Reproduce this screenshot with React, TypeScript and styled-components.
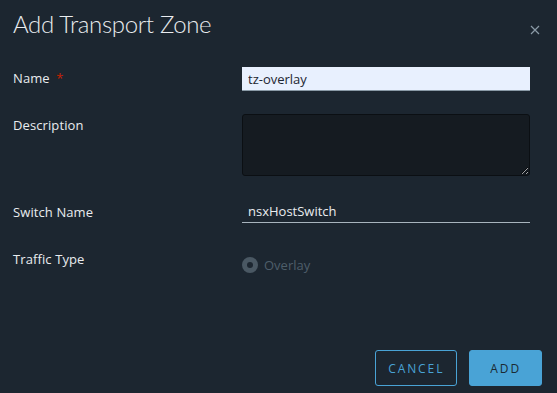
import styled, { createGlobalStyle } from "styled-components";

const GlobalStyle = createGlobalStyle`
  html, body {
    margin: 0;
    padding: 0;
    background: #1c2630;
  }
  body {
    font-family: "Open Sans", "Liberation Sans", sans-serif;
  }
`;

const App = () => {
  return (
    <>
      <GlobalStyle />
      <Modal>
        <Header>
          <Title>Add Transport Zone</Title>
          <CloseButton aria-label="Close">
            <svg width="10" height="10" viewBox="0 0 10 10">
              <path d="M1 1 L9 9 M9 1 L1 9" stroke="#8a9aa6" strokeWidth="1.2" />
            </svg>
          </CloseButton>
        </Header>
        <Form>
          <Row>
            <Label>
              Name <Required>*</Required>
            </Label>
            <TextInput $filled defaultValue="tz-overlay" />
          </Row>
          <Row>
            <Label $pad={2}>Description</Label>
            <TextArea />
          </Row>
          <Row>
            <Label $pad={4}>Switch Name</Label>
            <TextInput defaultValue="nsxHostSwitch" />
          </Row>
          <Row>
            <Label $pad={4}>Traffic Type</Label>
            <RadioWrap>
              <RadioDot />
              <RadioText>Overlay</RadioText>
            </RadioWrap>
          </Row>
        </Form>
        <Footer>
          <Button>CANCEL</Button>
          <Button $primary>ADD</Button>
        </Footer>
      </Modal>
    </>
  );
};

export default App;

const Modal = styled.div`
  width: 557px;
  height: 393px;
  box-sizing: border-box;
  background: #1c2630;
  display: flex;
  flex-direction: column;
`;

const Header = styled.div`
  display: flex;
  justify-content: space-between;
  align-items: flex-start;
  padding: 9px 17px 0 13px;
  height: 58px;
  box-sizing: border-box;
`;

const Title = styled.h1`
  margin: 0;
  font-family: Lato, "Open Sans", sans-serif;
  font-size: 24px;
  font-weight: 300;
  color: #e9ecef;
  letter-spacing: -0.35px;
`;

const CloseButton = styled.button`
  background: none;
  border: none;
  padding: 0;
  margin-top: 16px;
  cursor: pointer;
  display: flex;
`;

const Form = styled.div`
  display: flex;
  flex-direction: column;
  padding: 9px 27px 0 13px;
`;

const Row = styled.div`
  display: grid;
  grid-template-columns: 229px 1fr;
  align-items: start;
  margin-bottom: 23px;
`;

const Label = styled.div<{ $pad?: number }>`
  font-size: 13px;
  color: #e9ecef;
  padding-top: ${(p) => p.$pad ?? 2}px;
  line-height: 18px;
  letter-spacing: 0.1px;
`;

const Required = styled.span`
  color: #c92100;
  margin-left: 3px;
`;

const TextInput = styled.input<{ $filled?: boolean }>`
  height: 24px;
  box-sizing: border-box;
  width: 288px;
  border: none;
  border-bottom: 1px solid ${(p) => (p.$filled ? "#8a9aa6" : "#a8b4bd")};
  background: ${(p) => (p.$filled ? "#e8f0fe" : "transparent")};
  color: ${(p) => (p.$filled ? "#1c2630" : "#e9ecef")};
  padding: 0 6px;
  font-family: "Open Sans", "Liberation Sans", sans-serif;
  font-size: 13px;
  outline: none;
`;

const TextArea = styled.textarea`
  width: 288px;
  height: 62px;
  box-sizing: border-box;
  background: #151b21;
  border: 1px solid #0b0f13;
  border-radius: 3px;
  color: #e9ecef;
  resize: vertical;
  outline: none;
  margin: 0;
  display: block;
`;

const RadioWrap = styled.div`
  display: flex;
  align-items: center;
  gap: 6px;
  padding-top: 10px;
`;

const RadioDot = styled.span`
  width: 16px;
  height: 16px;
  border-radius: 50%;
  background: #4a5863;
  position: relative;
  &::after {
    content: "";
    position: absolute;
    left: 5px;
    top: 5px;
    width: 6px;
    height: 6px;
    border-radius: 50%;
    background: #1c2630;
  }
`;

const RadioText = styled.span`
  font-size: 13px;
  color: #4e5e6a;
`;

const Footer = styled.div`
  margin-top: auto;
  display: flex;
  justify-content: flex-end;
  gap: 12px;
  padding: 0 15px 7px 0;
`;

const Button = styled.button<{ $primary?: boolean }>`
  height: 36px;
  box-sizing: border-box;
  padding: 0 ${(p) => (p.$primary ? 20 : 12)}px;
  border-radius: 3px;
  border: 1px solid #49a3d6;
  background: ${(p) => (p.$primary ? "#49a3d6" : "transparent")};
  color: ${(p) => (p.$primary ? "#1b2a32" : "#49a3d6")};
  font-family: "Open Sans", "Liberation Sans", sans-serif;
  font-size: 12px;
  font-weight: 500;
  letter-spacing: 1.9px;
  cursor: pointer;
  min-width: 72px;
`;
